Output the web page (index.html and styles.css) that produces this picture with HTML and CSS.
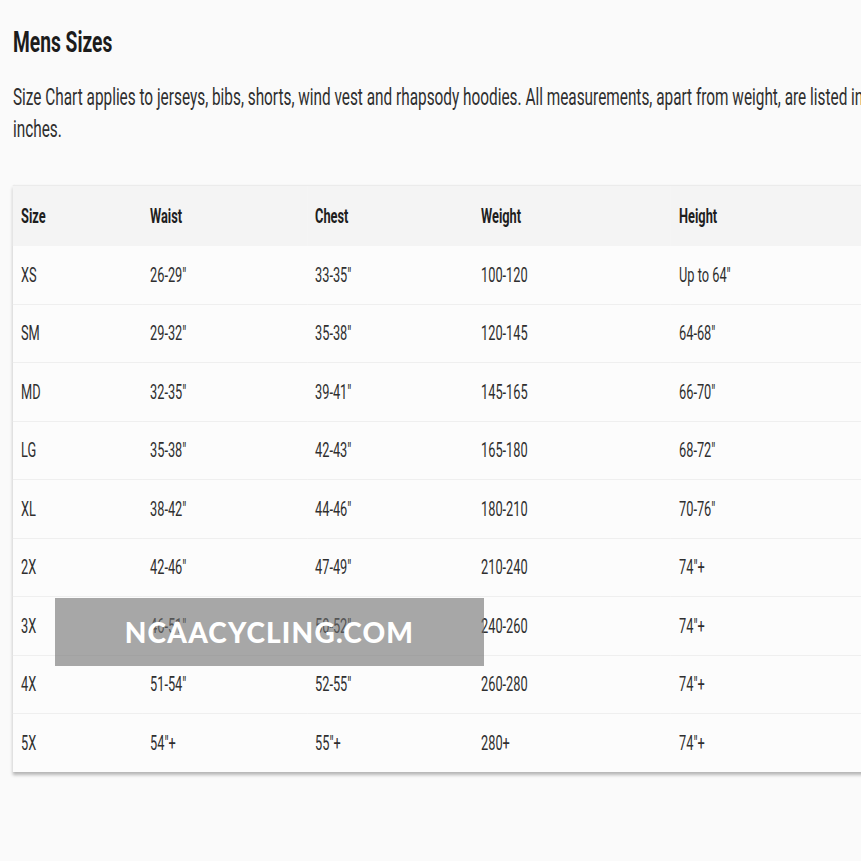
FILE: index.html
```html
<!DOCTYPE html>
<html lang="en">
<head>
<meta charset="utf-8">
<title>Mens Sizes</title>
<link rel="stylesheet" href="styles.css">
</head>
<body>
<div class="page">
  <div class="squash">
    <h1 class="title">Mens Sizes</h1>
    <p class="intro">Size Chart applies to jerseys, bibs, shorts, wind vest and rhapsody hoodies. All measurements, apart from weight, are listed in inches.</p>
    <div class="card">
      <table class="chart">
        <thead>
          <tr><th class="c1">Size</th><th class="c2">Waist</th><th class="c3">Chest</th><th class="c4">Weight</th><th class="c5">Height</th></tr>
        </thead>
        <tbody>
          <tr><td>XS</td><td>26-29"</td><td>33-35"</td><td>100-120</td><td>Up to 64"</td></tr>
          <tr><td>SM</td><td>29-32"</td><td>35-38"</td><td>120-145</td><td>64-68"</td></tr>
          <tr><td>MD</td><td>32-35"</td><td>39-41"</td><td>145-165</td><td>66-70"</td></tr>
          <tr><td>LG</td><td>35-38"</td><td>42-43"</td><td>165-180</td><td>68-72"</td></tr>
          <tr><td>XL</td><td>38-42"</td><td>44-46"</td><td>180-210</td><td>70-76"</td></tr>
          <tr><td>2X</td><td>42-46"</td><td>47-49"</td><td>210-240</td><td>74"+</td></tr>
          <tr><td>3X</td><td>46-51"</td><td>50-52"</td><td>240-260</td><td>74"+</td></tr>
          <tr><td>4X</td><td>51-54"</td><td>52-55"</td><td>260-280</td><td>74"+</td></tr>
          <tr><td>5X</td><td>54"+</td><td>55"+</td><td>280+</td><td>74"+</td></tr>
        </tbody>
      </table>
    </div>
  </div>
  <div class="watermark">NCAACYCLING.COM</div>
</div>
</body>
</html>
```

FILE: styles.css
```css
:root {
  --s: 0.64;
}
html, body {
  margin: 0;
  padding: 0;
  background: #fafafa;
  overflow: hidden;
  width: 861px;
  height: 861px;
}
.page {
  position: relative;
  width: 861px;
  height: 861px;
  overflow: hidden;
}
.squash {
  width: calc(1000px / var(--s));
  padding-left: calc(13px / var(--s));
  padding-top: 24px;
  transform: scaleX(var(--s));
  transform-origin: 0 0;
  font-family: Roboto, "Liberation Sans", sans-serif;
  color: #2b2b2b;
}
.title {
  margin: 0;
  font-size: 30px;
  line-height: 36px;
  font-weight: 700;
  color: #1c1c1c;
}
.intro {
  margin: 0;
  padding-top: 21px;
  width: calc(875px / var(--s));
  font-size: 24px;
  line-height: 32px;
  color: #2f2f2f;
}
.card {
  margin-top: 40px;
  background: #fcfcfc;
  border-top: 1px solid #ebebeb;
  box-shadow: 0 3px 4px rgba(0, 0, 0, 0.28), 0 0 2px rgba(0, 0, 0, 0.08);
  width: calc(900px / var(--s));
}
.chart {
  border-collapse: collapse;
  table-layout: fixed;
  width: 100%;
  font-size: 20px;
}
.chart th {
  background: #f4f4f4;
  height: 60px;
  text-align: left;
  font-weight: 700;
  color: #1e1e1e;
  padding: 0 0 0 calc(8px / var(--s));
}
.chart td {
  height: 57.5px;
  padding: 0 0 0 calc(8px / var(--s));
  border-top: 1px solid #efefef;
  color: #2f2f2f;
}
.chart tbody tr:first-child td {
  border-top: none;
}
.c1 { width: calc(121px / var(--s)); }
.c2 { width: calc(157px / var(--s)); }
.c3 { width: calc(158px / var(--s)); }
.c4 { width: calc(190px / var(--s)); }
.watermark {
  position: absolute;
  left: 55px;
  top: 598px;
  width: 429px;
  height: 68px;
  background: rgba(110, 110, 110, 0.6);
  color: #fff;
  font-family: Lato, "Open Sans", sans-serif;
  font-weight: 900;
  font-size: 28px;
  display: flex;
  align-items: center;
  justify-content: center;
  letter-spacing: 1.2px;
}
```
